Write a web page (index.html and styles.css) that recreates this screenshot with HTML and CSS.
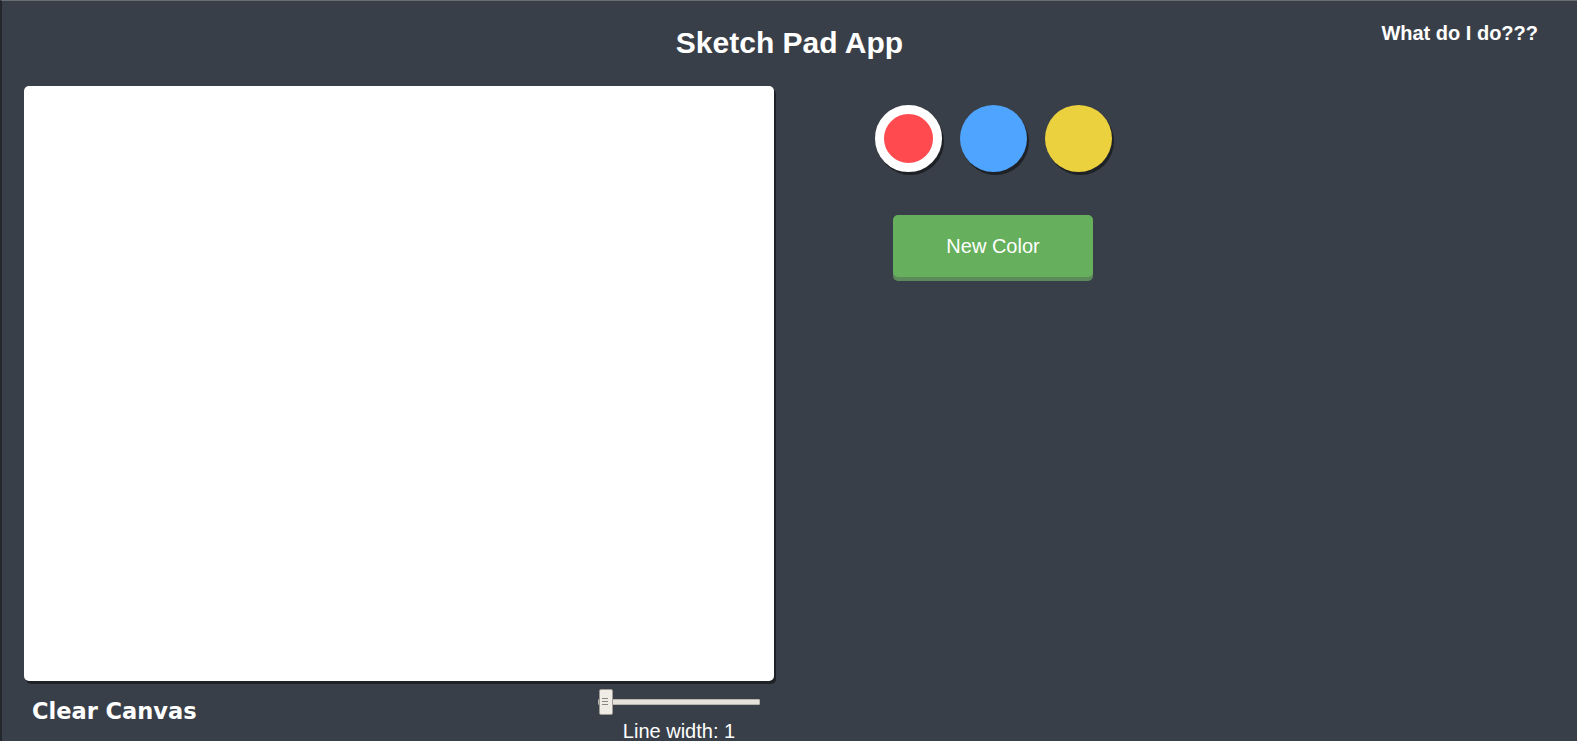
FILE: index.html
```html
<!DOCTYPE html>
<html lang="en">
<head>
<meta charset="utf-8">
<title>Sketch Pad App</title>
<link rel="stylesheet" href="styles.css">
</head>
<body>
  <header class="header">
    <div class="header-spacer"></div>
    <h1 class="title">Sketch Pad App</h1>
    <a class="help" href="#">What do I do???</a>
  </header>
  <main class="main">
    <section class="board">
      <canvas class="canvas" width="750" height="595"></canvas>
      <div class="board-footer">
        <button class="clear-btn" type="button">Clear Canvas</button>
        <div class="width-control">
          <input class="slider" type="range" min="1" max="20" value="1">
          <span class="width-label">Line width: 1</span>
        </div>
      </div>
    </section>
    <aside class="tools">
      <ul class="swatches">
        <li class="swatch swatch-red selected"></li>
        <li class="swatch swatch-blue"></li>
        <li class="swatch swatch-yellow"></li>
      </ul>
      <button class="new-color" type="button">New Color</button>
    </aside>
  </main>
</body>
</html>
```

FILE: styles.css
```css
* { box-sizing: border-box; }

html, body { height: 100%; }

body {
  margin: 0;
  background: #393f48;
  border-top: 1px solid #6b6f74;
  border-left: 2px solid #23272c;
  overflow: hidden;
  color: #fff;
  font-family: "Liberation Sans", Arial, sans-serif;
}

.header {
  display: grid;
  grid-template-columns: 1fr auto 1fr;
  align-items: start;
  height: 85px;
  padding: 0 39px;
}

.title {
  margin: 27px 0 0;
  font-size: 30px;
  line-height: 30px;
  font-weight: bold;
}

.help {
  justify-self: end;
  margin-top: 22px;
  font-size: 20px;
  line-height: 20px;
  font-weight: bold;
  color: #fff;
  text-decoration: none;
}

.main {
  display: flex;
  align-items: flex-start;
  padding-left: 22px;
}

.board {
  width: 750px;
  display: flex;
  flex-direction: column;
}

.canvas {
  display: block;
  width: 750px;
  height: 595px;
  background: #fff;
  border-radius: 5px;
  box-shadow: 2px 3px 0 #1e2125;
}

.board-footer {
  display: flex;
  justify-content: space-between;
  align-items: flex-start;
  padding: 0 14px 0 8px;
}

.clear-btn {
  margin-top: 19px;
  padding: 0;
  border: 0;
  background: none;
  color: #fff;
  font-family: "DejaVu Sans", Verdana, sans-serif;
  font-weight: bold;
  font-size: 22.5px;
  line-height: 22px;
  cursor: pointer;
}

.width-control {
  display: flex;
  flex-direction: column;
  align-items: center;
  margin-top: 8px;
}

.slider {
  -webkit-appearance: none;
  appearance: none;
  display: block;
  width: 162px;
  height: 26px;
  margin: 0;
  background: transparent;
}

.slider::-webkit-slider-runnable-track {
  height: 6px;
  background: #e6e2da;
  border: 1px solid #b9b5ae;
  border-radius: 1px;
}

.slider::-webkit-slider-thumb {
  -webkit-appearance: none;
  width: 14px;
  height: 26px;
  margin-top: -11px;
  border: 1px solid #9f9b94;
  border-radius: 2px;
  background-color: #efece6;
  background-image:
    linear-gradient(#8a8781, #8a8781),
    linear-gradient(#8a8781, #8a8781),
    linear-gradient(#8a8781, #8a8781);
  background-size: 6px 1px;
  background-repeat: no-repeat;
  background-position: 2px 8px, 2px 11px, 2px 14px;
}

.width-label {
  margin-top: 6px;
  font-size: 20px;
  line-height: 20px;
  color: #fff;
}

.tools {
  width: 438px;
  display: flex;
  flex-direction: column;
  align-items: center;
}

.swatches {
  display: flex;
  gap: 18px;
  margin: 19px 0 0;
  padding: 0;
  list-style: none;
}

.swatch {
  width: 67px;
  height: 67px;
  border-radius: 50%;
  box-shadow: 2px 3px 0 #1e2125;
  cursor: pointer;
}

.swatch-red { background: #ff4a50; }
.swatch-blue { background: #4ea4fe; }
.swatch-yellow { background: #ecd13f; }

.swatch.selected { border: 9px solid #fff; }

.new-color {
  margin-top: 43px;
  width: 200px;
  height: 62px;
  border: 0;
  border-radius: 5px;
  background: #66b05d;
  box-shadow: 0 4px 0 #5c8a5b;
  color: #fff;
  font-family: "Liberation Sans", Arial, sans-serif;
  font-size: 20px;
  cursor: pointer;
}
```
